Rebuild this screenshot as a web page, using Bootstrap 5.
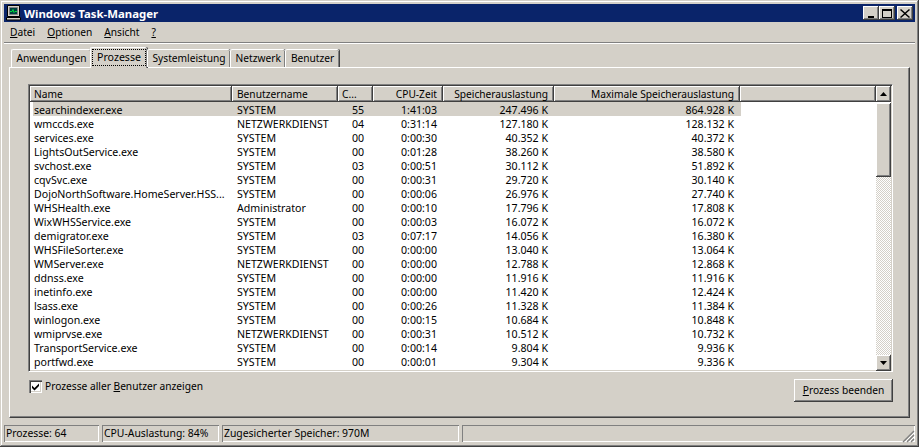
<!DOCTYPE html>
<html lang="de">
  <head>
    <meta charset="UTF-8" />
    <meta name="viewport" content="width=device-width, initial-scale=1.0" />
    <title>Windows Task-Manager</title>
    <link href="https://cdn.jsdelivr.net/npm/bootstrap@5.3.3/dist/css/bootstrap.min.css" rel="stylesheet" />
    <style>
      html, body { height: 447px; overflow: hidden; }
      body {
        background-color: #d4d0c8;
        color: #000;
        font-family: "Noto Sans", "Liberation Sans", sans-serif;
        font-size: 10.2px;
        line-height: 13px;
      }
      .tm-window {
        width: 919px;
        height: 447px;
        padding: 4px;
        box-shadow: inset -1px -1px 0 #404040, inset 1px 1px 0 #d4d0c8, inset -2px -2px 0 #808080, inset 2px 2px 0 #fff;
      }
      .tm-title {
        height: 18px;
        background: #0a246a;
        color: #fff;
        font-weight: 700;
        font-size: 11.4px;
        padding: 0 2px 0 2px;
      }
      .tm-title svg.tm-icon { margin-right: 2px; }
      .tm-winbtn {
        width: 16px;
        height: 14px;
        padding: 0;
        border: 0;
        border-radius: 0;
        background: #d4d0c8;
        box-shadow: inset -1px -1px 0 #404040, inset 1px 1px 0 #fff, inset -2px -2px 0 #808080;
        display: flex;
        align-items: center;
        justify-content: center;
      }
      .tm-winbtn.tm-gap { margin-left: 2px; }
      .tm-menu {
        height: 22px;
        padding: 0 0 1px 6px;
        gap: 12px;
        border-bottom: 1px solid #fff;
        box-shadow: inset 0 -1px 0 #808080;
      }
      .tm-tabs { height: 24px; padding-left: 7px; align-items: flex-end; position: relative; z-index: 1; }
      .tm-tab {
        height: 18px;
        margin-bottom: 1px;
        padding: 2px 4.5px 0 4.5px;
        background: #d4d0c8;
        border: 1px solid #fff;
        border-right: 0;
        border-bottom: 0;
        border-radius: 2px 2px 0 0;
        box-shadow: inset -1px 0 0 #808080, 1px 0 0 #404040;
      }
      .tm-tab-on {
        height: 21px;
        margin: 0 0 0 -1px;
        padding: 1px 1px 0 1px;
        font-size: 10.6px;
      }
      .tm-tab-on span { display: block; border: 1px dotted #000; padding: 1px 4px 0; height: 17px; }
      .tm-panel {
        margin: -1px 5px 0 5px;
        height: 351px;
        padding: 16px 16px 0 18px;
        border-top: 1px solid #fff;
        border-left: 1px solid #fff;
        border-right: 1px solid #404040;
        border-bottom: 1px solid #404040;
        box-shadow: inset -1px -1px 0 #808080;
      }
      .tm-list {
        height: 288px;
        border: 1px solid;
        border-color: #808080 #fff #fff #808080;
        box-shadow: inset 1px 1px 0 #404040, inset -1px -1px 0 #d4d0c8;
        padding: 1px;
        background: #fff;
      }
      .tm-scroll-area { width: 846px; flex: none; }
      .tm-heads { height: 16px; background: #d4d0c8; box-shadow: inset 0 -1px 0 #404040; }
      .tm-head {
        flex: none;
        height: 16px;
        padding: 2px 6px 0 4px;
        white-space: nowrap;
        box-shadow: inset -1px -1px 0 #404040, inset 1px 1px 0 #fff, inset -2px -2px 0 #808080;
      }
      .tm-head-user { padding-left: 5px; }
      .tm-filler { flex: 1 1 auto; }
      .tm-table {
        table-layout: fixed;
        width: 708px;
        margin: 0 0 0 3px;
        --bs-table-bg: transparent;
        --bs-table-color: #000;
        font-size: 10.6px;
      }
      .tm-table td {
        padding: 2px 0 0 1px;
        height: 14px;
        line-height: 12px;
        border: 0;
        white-space: nowrap;
      }
      .tm-table tr.tm-sel td { background: #d4d0c8; }
      .tm-table td.tm-user { padding-left: 5px; }
      .tm-table td.tm-cpu { padding-left: 14px; }
      .tm-table td.tm-num { text-align: right; padding-right: 6px; }
      .tm-table td.tm-max { padding-right: 7px; }
      .tm-scrollbar { width: 15px; height: 285px; flex: none; }
      .tm-sbtn {
        width: 15px;
        height: 16px;
        flex: none;
        padding: 0;
        border: 0;
        border-radius: 0;
        background: #d4d0c8;
        box-shadow: inset -1px -1px 0 #404040, inset 1px 1px 0 #fff, inset -2px -2px 0 #808080;
        display: flex;
        align-items: center;
        justify-content: center;
      }
      .tm-thumb { height: 74px; margin-top: 1px; flex: none; }
      .tm-track {
        flex: 1 1 auto;
        background: repeating-conic-gradient(#d4d0c8 0 25%, #fff 0 50%) 0 0 / 2px 2px;
      }
      .tm-bottom { padding: 7px 0 0 1px; }
      .tm-check-row { padding-top: 1px; }
      .tm-check {
        width: 13px;
        height: 13px;
        background: #fff;
        box-shadow: inset 1px 1px 0 #808080, inset 2px 2px 0 #404040, inset -1px -1px 0 #fff, inset -2px -2px 0 #d4d0c8;
        margin-right: 3px;
      }
      .tm-end {
        width: 99px;
        height: 23px;
        padding: 0 0 1px;
        border: 0;
        border-radius: 0;
        background: #d4d0c8;
        color: #000;
        font-size: 10.2px;
        line-height: 13px;
        box-shadow: inset -1px -1px 0 #404040, inset 1px 1px 0 #fff, inset -2px -2px 0 #808080;
      }
      .tm-status { margin-top: 7px; height: 17px; gap: 3px; position: relative; font-size: 10.4px; }
      .tm-cell {
        height: 17px;
        padding: 2px 0 0 2px;
        white-space: nowrap;
        box-shadow: inset 1px 1px 0 #808080, inset -1px -1px 0 #fff;
      }
      .tm-grip { position: absolute; right: 0; bottom: -1px; }
    </style>
  </head>
  <body>
    <div class="tm-window">
      <!-- Title bar -->
      <div class="tm-title d-flex align-items-center">
        <svg class="tm-icon" width="16" height="16" viewBox="0 0 16 16" aria-hidden="true">
          <path d="M1.5 0.5h12v11h-12z" fill="#d4d0c8" stroke="#000" stroke-width="1" />
          <path d="M3.5 2.5h8v7h-8z" fill="#004040" stroke="#808080" stroke-width="1" />
          <path d="M4 6.5h2l1-2 1 3 1-1h2" fill="none" stroke="#00e040" stroke-width="1" />
          <path d="M0.5 12.5h14v2.5h-14z" fill="#d4d0c8" stroke="#000" stroke-width="1" />
        </svg>
        <span class="flex-grow-1">Windows Task-Manager</span>
        <button class="tm-winbtn" type="button" aria-label="Minimieren">
          <svg width="10" height="9" viewBox="0 0 10 9"><path d="M2 7h6v2H2z" /></svg>
        </button>
        <button class="tm-winbtn" type="button" aria-label="Maximieren">
          <svg width="10" height="9" viewBox="0 0 10 9"><path d="M0 0h10v9H0z M1 2v6h8V2z" fill-rule="evenodd" /></svg>
        </button>
        <button class="tm-winbtn tm-gap" type="button" aria-label="Schließen">
          <svg width="10" height="9" viewBox="0 0 10 9"><path d="M1 0l4 3.5L9 0l1 1-4 3.5L10 8 9 9 5 5.5 1 9 0 8l4-3.5L0 1z" /></svg>
        </button>
      </div>

      <!-- Menu -->
      <div class="tm-menu d-flex align-items-center">
        <span><u>D</u>atei</span>
        <span><u>O</u>ptionen</span>
        <span><u>A</u>nsicht</span>
        <span><u>?</u></span>
      </div>

      <!-- Tabs -->
      <div class="tm-tabs d-flex">
        <div class="tm-tab">Anwendungen</div>
        <div class="tm-tab tm-tab-on"><span>Prozesse</span></div>
        <div class="tm-tab">Systemleistung</div>
        <div class="tm-tab">Netzwerk</div>
        <div class="tm-tab">Benutzer</div>
      </div>

      <div class="tm-panel">
        <div class="tm-list d-flex">
          <div class="tm-scroll-area">
            <div class="tm-heads d-flex">
              <div class="tm-head" style="width:202px">Name</div>
              <div class="tm-head tm-head-user" style="width:106px">Benutzername</div>
              <div class="tm-head" style="width:35px">C...</div>
              <div class="tm-head text-end" style="width:70px">CPU-Zeit</div>
              <div class="tm-head text-end" style="width:111px">Speicherauslastung</div>
              <div class="tm-head text-end" style="width:186px">Maximale Speicherauslastung</div>
              <div class="tm-head tm-filler"></div>
            </div>
            <table class="table tm-table">
              <colgroup>
                <col style="width:199px" /><col style="width:106px" /><col style="width:35px" />
                <col style="width:70px" /><col style="width:111px" /><col style="width:187px" />
              </colgroup>
              <tbody id="tm-rows"></tbody>
            </table>
          </div>
          <div class="tm-scrollbar d-flex flex-column">
            <button class="tm-sbtn" type="button" aria-label="Auf">
              <svg width="7" height="4" viewBox="0 0 7 4"><path d="M3.5 0L7 4H0z" /></svg>
            </button>
            <div class="tm-sbtn tm-thumb"></div>
            <div class="tm-track"></div>
            <button class="tm-sbtn" type="button" aria-label="Ab">
              <svg width="7" height="4" viewBox="0 0 7 4"><path d="M0 0h7L3.5 4z" /></svg>
            </button>
          </div>
        </div>

        <div class="tm-bottom d-flex justify-content-between align-items-start">
          <div class="d-flex align-items-center tm-check-row">
            <span class="tm-check d-flex align-items-center justify-content-center">
              <svg width="9" height="9" viewBox="0 0 9 9"><path d="M1 3.5l2.5 2.5L8 1.5V4L3.5 8.5 1 6z" /></svg>
            </span>
            <span>Prozesse aller <u>B</u>enutzer anzeigen</span>
          </div>
          <button class="tm-end" type="button"><u>P</u>rozess beenden</button>
        </div>
      </div>

      <!-- Status bar -->
      <div class="tm-status d-flex">
        <div class="tm-cell" style="width:95px">Prozesse: 64</div>
        <div class="tm-cell" style="width:117px">CPU-Auslastung: 84%</div>
        <div class="tm-cell" style="width:237px">Zugesicherter Speicher: 970M</div>
        <div class="tm-cell flex-grow-1"></div>
        <svg class="tm-grip" width="13" height="13" viewBox="0 0 13 13">
          <path d="M12 1L1 12M12 5L5 12M12 9L9 12" stroke="#808080" stroke-width="1.4" fill="none" />
          <path d="M12 3L3 12M12 7L7 12" stroke="#fff" stroke-width="1" fill="none" />
        </svg>
      </div>
    </div>

    <script>
      const rows = [
        ["searchindexer.exe", "SYSTEM", "55", "1:41:03", "247.496 K", "864.928 K"],
        ["wmccds.exe", "NETZWERKDIENST", "04", "0:31:14", "127.180 K", "128.132 K"],
        ["services.exe", "SYSTEM", "00", "0:00:30", "40.352 K", "40.372 K"],
        ["LightsOutService.exe", "SYSTEM", "00", "0:01:28", "38.260 K", "38.580 K"],
        ["svchost.exe", "SYSTEM", "03", "0:00:51", "30.112 K", "51.892 K"],
        ["cqvSvc.exe", "SYSTEM", "00", "0:00:31", "29.720 K", "30.140 K"],
        ["DojoNorthSoftware.HomeServer.HSS...", "SYSTEM", "00", "0:00:06", "26.976 K", "27.740 K"],
        ["WHSHealth.exe", "Administrator", "00", "0:00:10", "17.796 K", "17.808 K"],
        ["WixWHSService.exe", "SYSTEM", "00", "0:00:03", "16.072 K", "16.072 K"],
        ["demigrator.exe", "SYSTEM", "03", "0:07:17", "14.056 K", "16.380 K"],
        ["WHSFileSorter.exe", "SYSTEM", "00", "0:00:00", "13.040 K", "13.064 K"],
        ["WMServer.exe", "NETZWERKDIENST", "00", "0:00:00", "12.788 K", "12.868 K"],
        ["ddnss.exe", "SYSTEM", "00", "0:00:00", "11.916 K", "11.916 K"],
        ["inetinfo.exe", "SYSTEM", "00", "0:00:00", "11.420 K", "12.424 K"],
        ["lsass.exe", "SYSTEM", "00", "0:00:26", "11.328 K", "11.384 K"],
        ["winlogon.exe", "SYSTEM", "00", "0:00:15", "10.684 K", "10.848 K"],
        ["wmiprvse.exe", "NETZWERKDIENST", "00", "0:00:31", "10.512 K", "10.732 K"],
        ["TransportService.exe", "SYSTEM", "00", "0:00:14", "9.804 K", "9.936 K"],
        ["portfwd.exe", "SYSTEM", "00", "0:00:01", "9.304 K", "9.336 K"],
      ];
      const body = document.getElementById("tm-rows");
      rows.forEach(function (r, i) {
        const tr = document.createElement("tr");
        if (i === 0) tr.className = "tm-sel";
        r.forEach(function (val, c) {
          const td = document.createElement("td");
          td.textContent = val;
          if (c === 1) td.className = "tm-user";
          if (c === 2) td.className = "tm-cpu";
          if (c > 2) td.className = "tm-num";
          if (c === 5) td.className = "tm-num tm-max";
          tr.appendChild(td);
        });
        body.appendChild(tr);
      });
    </script>
    <script src="https://cdn.jsdelivr.net/npm/bootstrap@5.3.3/dist/js/bootstrap.bundle.min.js"></script>
  </body>
</html>
